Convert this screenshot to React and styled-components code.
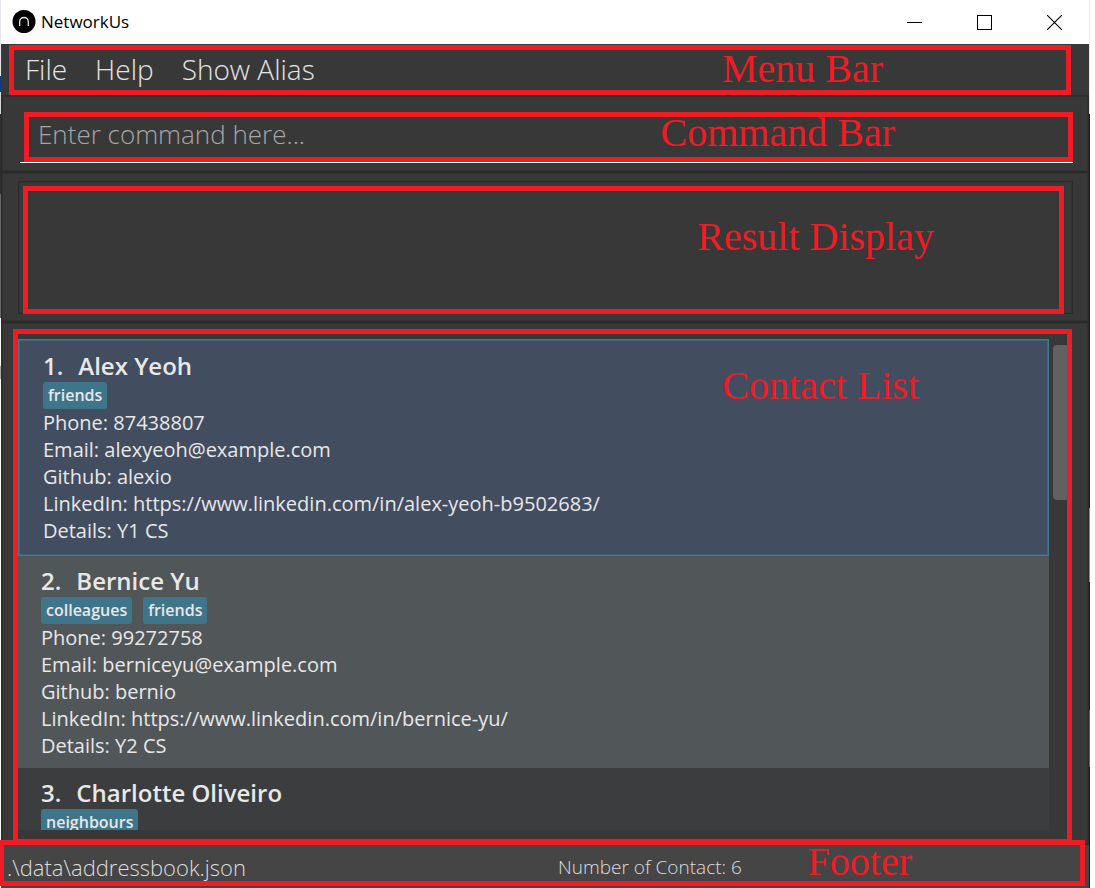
import React from 'react';
import styled, { createGlobalStyle, css } from 'styled-components';

const RED = '#ee1c25';

const GlobalStyle = createGlobalStyle`
  * { box-sizing: border-box; }
  body { margin: 0; background: #fff; }
  button, input { font: inherit; color: inherit; }
`;

const Desktop = styled.div`
  display: flex;
  height: 100vh;
  padding-right: 5px;
  overflow: hidden;
  font-family: 'Open Sans', 'Noto Sans', sans-serif;
`;

const Edge = styled.div`
  flex: none;
  width: 1px;
  background: ${(p) => p.$fill};
`;

const Window = styled.div`
  flex: 1;
  min-width: 0;
  display: flex;
  flex-direction: column;
  background: #383838;
`;

const TitleBar = styled.header`
  display: flex;
  align-items: center;
  height: 44px;
  padding-left: 11px;
  background: #fff;
  color: #000;
`;

const Title = styled.h1`
  flex: 1;
  margin: 0 0 0 5px;
  font-size: 17px;
  font-weight: 400;
  line-height: 24px;
`;

const WindowButton = styled.button`
  display: flex;
  align-items: center;
  justify-content: center;
  width: 70px;
  height: 44px;
  padding: 0;
  border: 0;
  background: none;
`;

const MenuBar = styled.nav`
  position: relative;
  display: flex;
  gap: 28px;
  height: 51px;
  padding: 0 24px;
`;

const MenuItem = styled.button`
  padding: 0;
  border: 0;
  background: none;
  color: #e4e4e4;
  font-size: 28px;
  font-weight: 300;
  line-height: 51px;
`;

const Pane = styled.section`
  position: relative;
  border: 1px solid #2b2b2b;
  box-shadow: inset 0 0 0 1px #313131;
`;

const CommandPane = styled(Pane)`
  height: 77px;
  padding: 14px 15px 8px 18px;
`;

const CommandInput = styled.input`
  display: block;
  width: 100%;
  height: 53px;
  padding: 0 18px 4px;
  border: 0;
  border-bottom: 1px solid #fff;
  outline: 0;
  background: transparent;
  color: #e4e4e4;
  font-size: 26px;
  font-weight: 300;
  &::placeholder { color: #a6a6a6; opacity: 1; }
`;

const ResultPane = styled(Pane)`
  height: 150px;
  padding: 8px 15px 7px 16px;
`;

const ResultBox = styled.output`
  display: block;
  height: 100%;
  border: 1px solid #2b2b2b;
  box-shadow: inset 0 0 0 1px #333;
`;

const ListPane = styled(Pane)`
  flex: 1;
  min-height: 0;
  display: flex;
  gap: 4px;
  padding: 16px 19px 14px 16px;
`;

const ContactList = styled.ol`
  flex: 1;
  margin: 0;
  padding: 0;
  overflow: hidden;
  list-style: none;
`;

const Card = styled.li`
  padding: 8px 23px 9px;
  background: ${(p) => (p.$odd ? '#3c3d3f' : '#515658')};
  color: #e8e8e8;
  ${(p) =>
    p.$selected &&
    css`
      padding: 9px 24px 11px;
      border: 1px solid #3e7b91;
      box-shadow: inset 0 0 0 1px #3f6579;
      background: #424d5f;
    `}
`;

const Name = styled.h2`
  display: flex;
  gap: 15px;
  margin: 0;
  font-size: 24px;
  font-weight: 600;
  line-height: 33px;
`;

const Tags = styled.div`
  display: flex;
  gap: 11px;
`;

const Tag = styled.span`
  padding: 0 5px;
  border-radius: 3px;
  background: #3e758a;
  font-size: 16px;
  font-weight: 600;
  line-height: 27px;
`;

const Field = styled.p`
  margin: 0;
  font-size: 20px;
  font-weight: 400;
  line-height: 27px;
`;

const ScrollTrack = styled.div`
  width: 16px;
  padding-top: 6px;
`;

const ScrollThumb = styled.div`
  height: 155px;
  border-radius: 4px;
  background: #616161;
`;

const Footer = styled.footer`
  position: relative;
  display: grid;
  grid-template-columns: 1fr 1fr;
  height: 43px;
  background: #454545;
  color: #dedede;
  font-weight: 300;
  line-height: 45px;
`;

const SaveLocation = styled.span`
  padding-left: 6px;
  font-size: 22px;
`;

const ContactCount = styled.span`
  padding-left: 13px;
  font-size: 19px;
`;

const Outline = styled.div`
  position: absolute;
  z-index: 1;
  inset: ${(p) => p.$inset};
  border: 5px solid ${RED};
  pointer-events: none;
`;

const Caption = styled.span`
  position: absolute;
  top: ${(p) => p.$top};
  right: ${(p) => p.$right};
  color: ${RED};
  font: 400 40px/44px 'Liberation Serif', 'Times New Roman', serif;
  white-space: nowrap;
`;

function Callout({ inset, top, right, children }) {
  return (
    <Outline $inset={inset}>
      <Caption $top={top} $right={right}>{children}</Caption>
    </Outline>
  );
}

const contacts = [
  {
    name: 'Alex Yeoh',
    tags: ['friends'],
    fields: [
      'Phone: 87438807',
      'Email: alexyeoh@example.com',
      'Github: alexio',
      'LinkedIn: https://www.linkedin.com/in/alex-yeoh-b9502683/',
      'Details: Y1 CS',
    ],
  },
  {
    name: 'Bernice Yu',
    tags: ['colleagues', 'friends'],
    fields: [
      'Phone: 99272758',
      'Email: berniceyu@example.com',
      'Github: bernio',
      'LinkedIn: https://www.linkedin.com/in/bernice-yu/',
      'Details: Y2 CS',
    ],
  },
  { name: 'Charlotte Oliveiro', tags: ['neighbours'], fields: [] },
];

const leftFill =
  'linear-gradient(#e6e6ee 76px, #0b3d84 76px 92px, #d8d8d8 92px 114px, #2d2d2d 114px 194px, #686868 194px 318px, #fff 318px 366px, #aaa 366px 379px, #fff 379px)';
const rightFill =
  'linear-gradient(#e6e6e6 114px, #1a1a1a 114px 508px, #7c9a4c 508px 582px, #1a1a1a 582px 710px, #6b5c54 710px 767px, #1a1a1a 767px)';

export default function App() {
  return (
    <Desktop>
      <GlobalStyle />
      <Edge $fill={leftFill} />
      <Window>
        <TitleBar>
          <svg width="24" height="24" viewBox="0 0 24 24" fill="none" aria-hidden="true">
            <circle cx="12" cy="11.5" r="11.5" fill="#000" />
            <path d="M7.7 16v-4.2a4.3 4.3 0 0 1 8.6 0V16" stroke="#e8e8e8" strokeWidth="1.3" />
          </svg>
          <Title>NetworkUs</Title>
          <WindowButton aria-label="Minimize">
            <svg width="15" height="15" shapeRendering="crispEdges"><path d="M0 7.5h15" stroke="#000" /></svg>
          </WindowButton>
          <WindowButton aria-label="Maximize">
            <svg width="15" height="15" shapeRendering="crispEdges"><path d="M.5 .5h14v14h-14z" fill="none" stroke="#000" /></svg>
          </WindowButton>
          <WindowButton aria-label="Close">
            <svg width="15" height="15"><path d="M0 0l15 15M15 0L0 15" stroke="#000" strokeWidth="1.1" /></svg>
          </WindowButton>
        </TitleBar>

        <MenuBar>
          <MenuItem>File</MenuItem>
          <MenuItem>Help</MenuItem>
          <MenuItem>Show Alias</MenuItem>
          <Callout inset="1px 18px 0 8px" top="-3px" right="183px">Menu Bar</Callout>
        </MenuBar>

        <CommandPane>
          <CommandInput aria-label="Command" placeholder="Enter command here..." />
          <Callout inset="16px 15px 9px 22px" top="-6px" right="173px">Command Bar</Callout>
        </CommandPane>

        <ResultPane>
          <ResultBox aria-label="Result" />
          <Callout inset="13px 24px 7px 21px" top="24px" right="125px">Result Display</Callout>
        </ResultPane>

        <ListPane>
          <ContactList>
            {contacts.map((c, i) => (
              <Card key={c.name} $selected={i === 0} $odd={i % 2 === 0}>
                <Name><span>{i + 1}.</span><span>{c.name}</span></Name>
                <Tags>{c.tags.map((t) => <Tag key={t}>{t}</Tag>)}</Tags>
                {c.fields.map((f) => <Field key={f}>{f}</Field>)}
              </Card>
            ))}
          </ContactList>
          <ScrollTrack><ScrollThumb /></ScrollTrack>
          <Callout inset="6px 16px 0 11px" top="30px" right="148px">Contact List</Callout>
        </ListPane>

        <Footer>
          <SaveLocation>.\data\addressbook.json</SaveLocation>
          <ContactCount>Number of Contact: 6</ContactCount>
          <Callout inset="-5px 4px 2px -2px" top="-5px" right="168px">Footer</Callout>
        </Footer>
      </Window>
      <Edge $fill={rightFill} />
    </Desktop>
  );
}
